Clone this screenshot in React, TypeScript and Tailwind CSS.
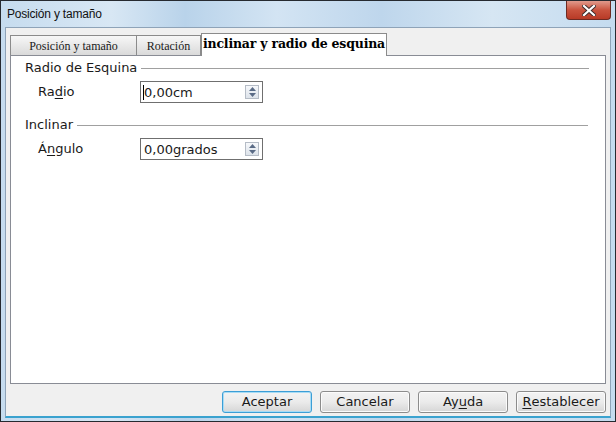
import type { ReactNode } from 'react'

const sans = "font-['DejaVu_Sans',sans-serif]"

function Spin() {
  return (
    <div className="flex h-[14px] w-[14px] flex-col items-center justify-center gap-[2px] border border-[#b5bcc6] bg-gradient-to-b from-[#f6f8fb] to-[#dde3ea]">
      <svg width="7" height="4" viewBox="0 0 7 4">
        <path d="M0 4 L3.5 0 L7 4 Z" fill="#5a6b86" />
      </svg>
      <svg width="7" height="4" viewBox="0 0 7 4">
        <path d="M0 0 L3.5 4 L7 0 Z" fill="#5a6b86" />
      </svg>
    </div>
  )
}

function Field({ value, caret }: { value: string; caret?: boolean }) {
  return (
    <div className="flex h-[22px] w-[123px] items-center justify-between border border-[#6f6f6f] bg-white pl-[3px] pr-[3px]">
      <span className="relative text-[13px] leading-none text-[#1a1a1a]">
        {caret && <span className="absolute -left-[1px] top-[-1px] h-[15px] w-px bg-black" />}
        {value}
      </span>
      <Spin />
    </div>
  )
}

function Group({ title, lineWidth, children }: { title: string; lineWidth: string; children: ReactNode }) {
  return (
    <div className="flex flex-col">
      <div className="flex items-center gap-[4px]">
        <span className="text-[13px] leading-[16px] text-[#1a1a1a]">{title}</span>
        <div className={`h-px ${lineWidth} bg-[#a0a0a0]`} />
      </div>
      {children}
    </div>
  )
}

function Btn({ children, def }: { children: ReactNode; def?: boolean }) {
  return (
    <div
      className={`flex h-[22px] w-[90px] items-center justify-center rounded-[3px] border bg-gradient-to-b from-[#f3f3f3] via-[#ebebeb] to-[#d6d6d6] text-[13px] text-[#1a1a1a] ${
        def ? 'border-[#3c9ed6] shadow-[inset_0_0_0_1px_#a8dcf5]' : 'border-[#8c8c8c] shadow-[inset_0_0_0_1px_#fbfbfb]'
      }`}
    >
      {children}
    </div>
  )
}

export default function App() {
  return (
    <div
      className={`flex h-[422px] w-[616px] flex-col border border-[#262a30] bg-[linear-gradient(90deg,#c6dcef_0%,#d8e7f4_18%,#b9d3ea_30%,#d3e4f3_45%,#bed6ec_62%,#d6e6f3_80%,#c4dbef_100%)] ${sans}`}
    >
      <div className="flex h-[26px] shrink-0 items-start justify-between pl-[6px]">
        <span className="mt-[7px] text-[12px] leading-none text-[#111] font-['Liberation_Sans',sans-serif] tracking-[-0.2px]">
          Posición y tamaño
        </span>
        <div className="mr-[4px] flex h-[19px] w-[45px] items-center justify-center rounded-b-[4px] border border-t-0 border-[#6d2a22] bg-gradient-to-b from-[#e09a8c] via-[#c9533e] to-[#b83a26]">
          <svg width="14" height="11" viewBox="0 0 14 11">
            <path d="M2 1 L12 10 M12 1 L2 10" stroke="#3a2a2a" strokeWidth="4" strokeLinecap="square" />
            <path d="M2 1 L12 10 M12 1 L2 10" stroke="#ffffff" strokeWidth="2.2" strokeLinecap="square" />
          </svg>
        </div>
      </div>
      <div className="mx-[4px] mb-[3px] flex flex-1 flex-col border border-[#8ea3b8] border-b-[#3aa2cf] border-b-2 bg-[#f0f0f0]">
        <div className="flex h-[27px] items-end pl-[4px]">
          <div className="flex h-[20px] w-[127px] items-center justify-center border border-b-0 border-[#8b8b8b] bg-gradient-to-b from-[#f7f7f7] to-[#dadada] font-['Liberation_Serif',serif] text-[12px] text-[#1a1a1a]">
            Posición y tamaño
          </div>
          <div className="flex h-[20px] w-[64px] items-center justify-center border border-b-0 border-l-0 border-[#8b8b8b] bg-gradient-to-b from-[#f7f7f7] to-[#dadada] font-['Liberation_Serif',serif] text-[12px] text-[#1a1a1a]">
            Rotación
          </div>
          <div className="relative -mb-px flex h-[23px] w-[186px] items-center justify-center border border-b-0 border-[#8b8b8b] bg-white pb-[2px] font-['DejaVu_Serif',serif] text-[12.5px] font-bold text-black tracking-[-0.2px]">
            inclinar y radio de esquina
          </div>
        </div>
        <div className="ml-[4px] mr-[4px] flex h-[329px] flex-col gap-[14px] border border-[#898c95] bg-white pl-[14px] pt-[4px]">
          <Group title="Radio de Esquina" lineWidth="w-[448px]">
            <div className="mt-[5px] flex items-center">
              <span className="w-[115px] pl-[13px] text-[13px] text-[#1a1a1a]">
                Ra<span className="underline underline-offset-2">d</span>io
              </span>
              <Field value="0,00cm" caret />
            </div>
          </Group>
          <Group title="Inclinar" lineWidth="w-[511px]">
            <div className="mt-[5px] flex items-center">
              <span className="w-[115px] pl-[13px] text-[13px] text-[#1a1a1a]">
                Á<span className="underline underline-offset-2">n</span>gulo
              </span>
              <Field value="0,00grados" />
            </div>
          </Group>
        </div>
        <div className="mt-[7px] flex justify-end gap-[8px] pr-[4px]">
          <Btn def>Aceptar</Btn>
          <Btn>Cancelar</Btn>
          <Btn>
            Ay<span className="underline underline-offset-2">u</span>da
          </Btn>
          <Btn>
            <span className="underline underline-offset-2">R</span>establecer
          </Btn>
        </div>
      </div>
    </div>
  )
}
